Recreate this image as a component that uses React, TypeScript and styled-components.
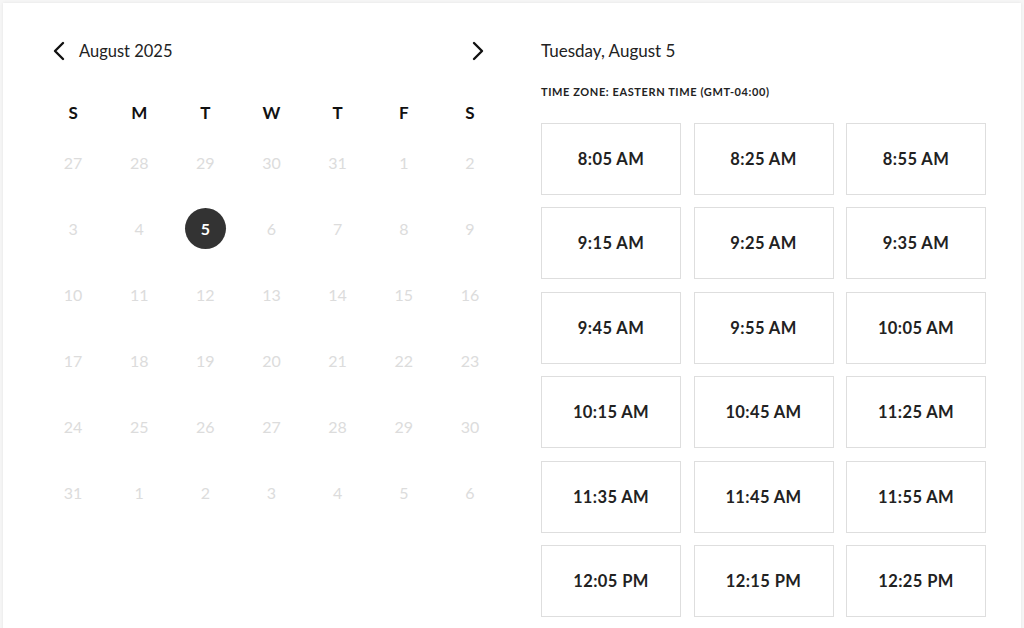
import React from 'react'
import styled, { createGlobalStyle } from 'styled-components'

const GlobalStyle = createGlobalStyle`
  html, body {
    margin: 0;
    padding: 0;
    background: #f6f6f6;
    font-family: Lato, "Open Sans", sans-serif;
    color: #222;
  }
`;

const Page = styled.div`
  padding: 3px 3px 0 3px;
  height: 625px;
  overflow: hidden;
`;

const Card = styled.div`
  background: #fff;
  box-shadow: 0 0 3px rgba(0, 0, 0, 0.08);
  display: flex;
  gap: 38px;
  padding: 28px 35px 0 37px;
  height: 700px;
  width: 946px;
`;

const CalendarColumn = styled.section`
  width: 463px;
  display: flex;
  flex-direction: column;
`;

const MonthHeader = styled.div`
  height: 40px;
  display: flex;
  align-items: center;
  padding: 0 13px 0 7px;
`;

const NavButton = styled.button`
  width: 24px;
  height: 24px;
  border: 0;
  padding: 0;
  background: none;
  display: flex;
  align-items: center;
  justify-content: center;
  color: #111;
  cursor: pointer;
`;

const MonthTitle = styled.span`
  flex: 1;
  margin-left: 8px;
  font-size: 16.5px;
  color: #222;
`;

const WeekGrid = styled.div<{ $rowHeight: number }>`
  display: grid;
  grid-template-columns: repeat(7, 1fr);
  grid-auto-rows: ${(p) => p.$rowHeight}px;
`;

const WeekdayGrid = styled(WeekGrid)`
  margin-top: 23px;
`;

const Weekday = styled.div`
  display: flex;
  align-items: center;
  justify-content: center;
  font-size: 17px;
  font-weight: 700;
  color: #111;
`;

const DayCell = styled.div`
  display: flex;
  align-items: center;
  justify-content: center;
  padding-bottom: 1px;
`;

const DayNumber = styled.span<{ $selected?: boolean }>`
  width: 41px;
  height: 41px;
  border-radius: 50%;
  display: flex;
  align-items: center;
  justify-content: center;
  font-size: 16px;
  color: ${(p) => (p.$selected ? '#fff' : '#dcdcdc')};
  background: ${(p) => (p.$selected ? '#333' : 'transparent')};
  font-weight: ${(p) => (p.$selected ? 700 : 400)};
`;

const SlotsColumn = styled.section`
  width: 445px;
  display: flex;
  flex-direction: column;
`;

const DayTitle = styled.h2`
  margin: 0;
  height: 40px;
  line-height: 40px;
  font-size: 17px;
  font-weight: 400;
  color: #222;
`;

const TimeZone = styled.div`
  margin-top: 13px;
  height: 16px;
  line-height: 16px;
  font-size: 11px;
  font-weight: 700;
  letter-spacing: 0.6px;
  text-transform: uppercase;
  color: #222;
`;

const SlotGrid = styled.div`
  margin-top: 23px;
  display: grid;
  grid-template-columns: repeat(3, 1fr);
  grid-auto-rows: 72px;
  gap: 12.4px 12.5px;
`;

const Slot = styled.button`
  border: 1px solid #dedede;
  background: #fff;
  display: flex;
  align-items: center;
  justify-content: center;
  font-family: Lato, "Open Sans", sans-serif;
  font-size: 16.5px;
  font-weight: 700;
  letter-spacing: 0.4px;
  color: #222;
  cursor: pointer;
`;

const Chevron: React.FC<{ dir: 'left' | 'right' }> = ({ dir }) => (
  <svg width="12" height="20" viewBox="0 0 12 20" fill="none">
    <polyline
      points={dir === 'left' ? '10,2 2,10 10,18' : '2,2 10,10 2,18'}
      stroke="currentColor"
      strokeWidth="2.4"
      strokeLinecap="round"
      strokeLinejoin="round"
    />
  </svg>
);

const weekdays = ['S', 'M', 'T', 'W', 'T', 'F', 'S'];

const days = [
  27, 28, 29, 30, 31, 1, 2,
  3, 4, 5, 6, 7, 8, 9,
  10, 11, 12, 13, 14, 15, 16,
  17, 18, 19, 20, 21, 22, 23,
  24, 25, 26, 27, 28, 29, 30,
  31, 1, 2, 3, 4, 5, 6,
];

const slots = [
  '8:05 AM', '8:25 AM', '8:55 AM',
  '9:15 AM', '9:25 AM', '9:35 AM',
  '9:45 AM', '9:55 AM', '10:05 AM',
  '10:15 AM', '10:45 AM', '11:25 AM',
  '11:35 AM', '11:45 AM', '11:55 AM',
  '12:05 PM', '12:15 PM', '12:25 PM',
];

export default function App() {
  return (
    <>
      <GlobalStyle />
      <Page>
        <Card>
          <CalendarColumn>
            <MonthHeader>
              <NavButton aria-label="Previous month"><Chevron dir="left" /></NavButton>
              <MonthTitle>August 2025</MonthTitle>
              <NavButton aria-label="Next month"><Chevron dir="right" /></NavButton>
            </MonthHeader>
            <WeekdayGrid $rowHeight={36}>
              {weekdays.map((d, i) => <Weekday key={i}>{d}</Weekday>)}
            </WeekdayGrid>
            <WeekGrid $rowHeight={66}>
              {days.map((d, i) => (
                <DayCell key={i}>
                  <DayNumber $selected={i === 9}>{d}</DayNumber>
                </DayCell>
              ))}
            </WeekGrid>
          </CalendarColumn>
          <SlotsColumn>
            <DayTitle>Tuesday, August 5</DayTitle>
            <TimeZone>Time zone: Eastern Time (GMT-04:00)</TimeZone>
            <SlotGrid>
              {slots.map((s) => <Slot key={s}>{s}</Slot>)}
            </SlotGrid>
          </SlotsColumn>
        </Card>
      </Page>
    </>
  );
}
